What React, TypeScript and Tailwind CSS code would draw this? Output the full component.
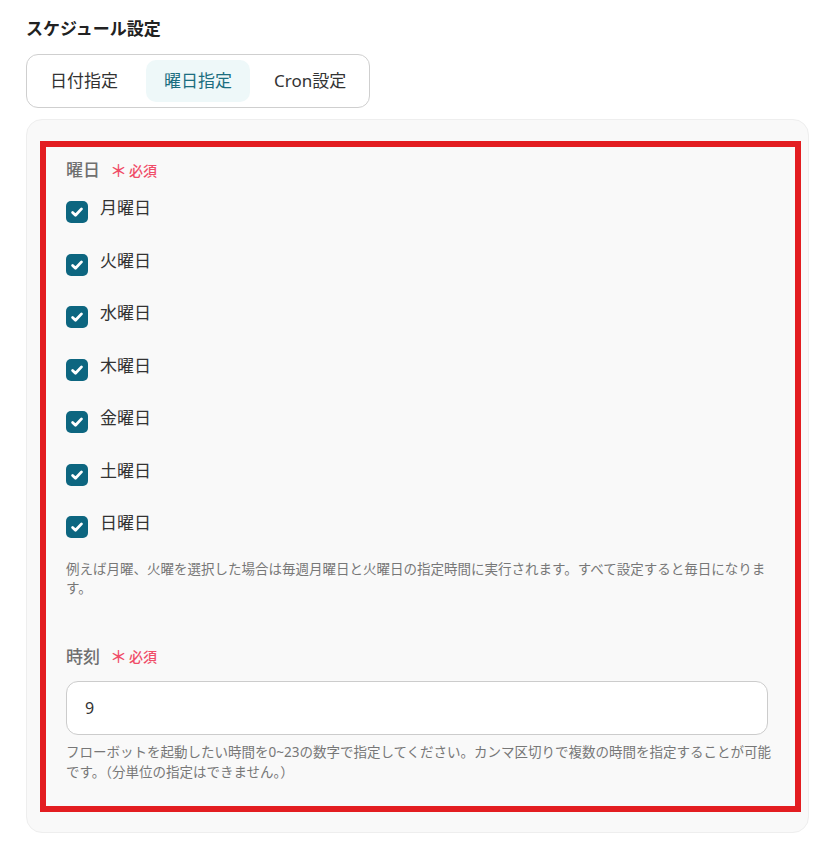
import React, { useState } from "react";

const DAYS = ["月曜日", "火曜日", "水曜日", "木曜日", "金曜日", "土曜日", "日曜日"];
const TABS = ["日付指定", "曜日指定", "Cron設定"];

function CheckIcon() {
  return (
    <svg width="16" height="16" viewBox="0 0 16 16" fill="none">
      <path d="M3.6 8.4l2.9 2.9 6-6.4" stroke="white" strokeWidth="2.8" strokeLinecap="round" strokeLinejoin="round" />
    </svg>
  );
}

function Required() {
  return (
    <span className="ml-2.5 flex items-center text-[14px] text-[#f04d68] font-medium">
      <span className="text-[17px] leading-none mr-0.5">＊</span>必須
    </span>
  );
}

export default function App() {
  const [tab, setTab] = useState(1);
  const [checked, setChecked] = useState(DAYS.map(() => true));
  const [hour, setHour] = useState("9");

  return (
    <div
      className="min-h-screen bg-white text-[#333] pl-[26px] pr-[19px] pt-[17px] pb-[9px]"
      style={{ fontFamily: '"Noto Sans", "Noto Sans CJK JP", sans-serif' }}
    >
      <h1 className="text-[17px] font-semibold text-[#222] leading-6">スケジュール設定</h1>

      <div className="mt-[13px] inline-flex items-center rounded-[12px] border border-[#cfcfcf] pl-[5px] pr-[5px] py-[5px] h-[54px]">
        {TABS.map((t, i) => (
          <button
            key={t}
            onClick={() => setTab(i)}
            className={`h-[42px] px-[18px] rounded-[10px] text-[17px] cursor-pointer ${
              i === 1 ? "ml-[10px]" : i === 2 ? "ml-[6px]" : ""
            } ${tab === i ? "bg-[#eef8f9] text-[#1b6e80]" : "text-[#333]"}`}
          >
            {t}
          </button>
        ))}
      </div>

      <section className="mt-[11px] rounded-[16px] border border-[#eeeeee] bg-[#f9f9f9] pl-[13px] pr-[7px] pt-[21px] pb-[20px]">
        <div className="border-[6px] border-[#e31d21] pl-[20px] pr-[21px] pt-[11px] pb-[24px]">
          <div className="flex items-center h-6">
            <span className="text-[17px] font-medium text-[#707070]">曜日</span>
            <Required />
          </div>

          <div className="mt-[14px] flex flex-col">
            {DAYS.map((d, i) => (
              <label key={d} className="flex items-start gap-3 h-[52.5px] cursor-pointer">
                <span
                  onClick={() => setChecked(checked.map((c, j) => (j === i ? !c : c)))}
                  className={`mt-[5px] w-[22px] h-[22px] rounded-[5px] flex items-center justify-center ${
                    checked[i] ? "bg-[#0d6680]" : "bg-white border border-[#ccc]"
                  }`}
                >
                  {checked[i] && <CheckIcon />}
                </span>
                <span className="text-[17px] leading-6 text-[#333]">{d}</span>
              </label>
            ))}
          </div>

          <p className="-mt-[4px] text-[13.5px] leading-[19px] text-[#777]">
            例えば月曜、火曜を選択した場合は毎週月曜日と火曜日の指定時間に実行されます。すべて設定すると毎日になります。
          </p>

          <div className="mt-[47px] flex items-center h-6">
            <span className="text-[17px] font-medium text-[#707070]">時刻</span>
            <Required />
          </div>

          <input
            value={hour}
            onChange={(e) => setHour(e.target.value)}
            className="mt-3 block w-[calc(100%-6px)] h-[54px] rounded-[12px] border border-[#cccccc] bg-white pl-[18px] text-[16px] text-[#333] outline-none"
          />

          <p className="mt-[7px] text-[13.5px] leading-5 text-[#777]">
            フローボットを起動したい時間を0~23の数字で指定してください。カンマ区切りで複数の時間を指定することが可能です。（分単位の指定はできません。）
          </p>
        </div>
      </section>
    </div>
  );
}
